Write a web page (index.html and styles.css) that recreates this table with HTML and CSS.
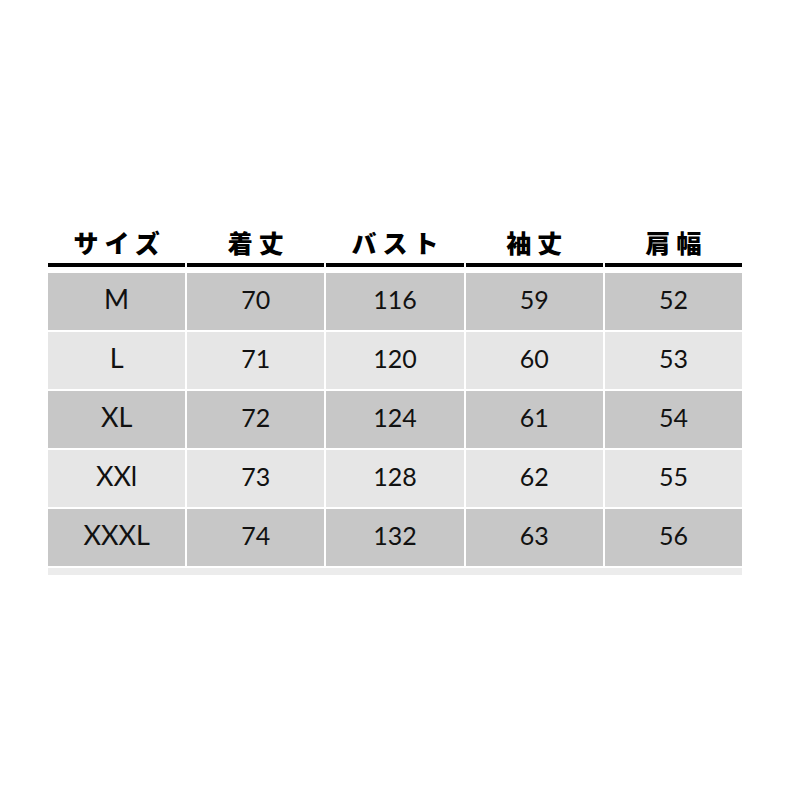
FILE: index.html
```html
<!DOCTYPE html>
<html lang="ja">
<head>
<meta charset="utf-8">
<title>サイズ表</title>
<link rel="stylesheet" href="styles.css">
</head>
<body>
<div class="page">
  <div class="table">
    <div class="head">サイズ</div>
    <div class="head">着丈</div>
    <div class="head">バスト</div>
    <div class="head">袖丈</div>
    <div class="head">肩幅</div>

    <div class="cell dark label">M</div>
    <div class="cell dark">70</div>
    <div class="cell dark">116</div>
    <div class="cell dark">59</div>
    <div class="cell dark">52</div>

    <div class="cell light label">L</div>
    <div class="cell light">71</div>
    <div class="cell light">120</div>
    <div class="cell light">60</div>
    <div class="cell light">53</div>

    <div class="cell dark label">XL</div>
    <div class="cell dark">72</div>
    <div class="cell dark">124</div>
    <div class="cell dark">61</div>
    <div class="cell dark">54</div>

    <div class="cell light label">XXl</div>
    <div class="cell light">73</div>
    <div class="cell light">128</div>
    <div class="cell light">62</div>
    <div class="cell light">55</div>

    <div class="cell dark label">XXXL</div>
    <div class="cell dark">74</div>
    <div class="cell dark">132</div>
    <div class="cell dark">63</div>
    <div class="cell dark">56</div>

    <div class="foot"></div>
  </div>
</div>
</body>
</html>
```

FILE: styles.css
```css
html, body {
  margin: 0;
  padding: 0;
  background: #ffffff;
}

.page {
  width: 800px;
  height: 800px;
  padding: 230px 0 0 48px;
  box-sizing: border-box;
}

.table {
  width: 694px;
  display: grid;
  grid-template-columns: repeat(5, 1fr);
  column-gap: 2px;
  row-gap: 2px;
  grid-template-rows: 41px repeat(5, 57px) 7px;
}

.head {
  border-bottom: 4px solid #000000;
  display: flex;
  align-items: flex-end;
  justify-content: center;
  padding-bottom: 7px;
  padding-left: 6px;
  font-family: "Noto Sans CJK JP", sans-serif;
  font-weight: 900;
  font-size: 25px;
  line-height: 28px;
  letter-spacing: 6px;
  color: #000000;
  margin-bottom: 4px;
}

.cell {
  display: flex;
  align-items: center;
  justify-content: center;
  padding-bottom: 6px;
  font-family: Lato, "Liberation Sans", sans-serif;
  font-size: 25px;
  color: #111111;
  box-sizing: border-box;
}

.label {
  font-size: 27px;
}

.dark {
  background: #c7c7c7;
}

.light {
  background: #e6e6e6;
}

.foot {
  grid-column: 1 / -1;
  background: #ececec;
}
```
